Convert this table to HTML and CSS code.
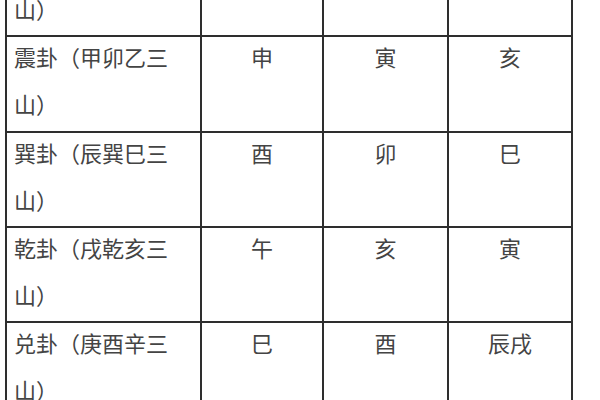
FILE: index.html
```html
<!DOCTYPE html>
<html lang="zh">
<head>
<meta charset="utf-8">
<link rel="stylesheet" href="styles.css">
</head>
<body>
<table class="gua">
  <colgroup>
    <col class="c1"><col class="c2"><col class="c3"><col class="c4">
  </colgroup>
  <tbody>
    <tr><td class="name"><div class="txt">坎卦（壬子癸三山）</div></td><td><div class="txt">辰</div></td><td><div class="txt">子</div></td><td><div class="txt">申</div></td></tr>
    <tr><td class="name"><div class="txt">震卦（甲卯乙三山）</div></td><td><div class="txt">申</div></td><td><div class="txt">寅</div></td><td><div class="txt">亥</div></td></tr>
    <tr><td class="name"><div class="txt">巽卦（辰巽巳三山）</div></td><td><div class="txt">酉</div></td><td><div class="txt">卯</div></td><td><div class="txt">巳</div></td></tr>
    <tr><td class="name"><div class="txt">乾卦（戌乾亥三山）</div></td><td><div class="txt">午</div></td><td><div class="txt">亥</div></td><td><div class="txt">寅</div></td></tr>
    <tr><td class="name"><div class="txt">兑卦（庚酉辛三山）</div></td><td><div class="txt">巳</div></td><td><div class="txt">酉</div></td><td><div class="txt">辰戌</div></td></tr>
  </tbody>
</table>
</body>
</html>
```

FILE: styles.css
```css
html, body {
  margin: 0;
  padding: 0;
  background: #ffffff;
  overflow: hidden;
}
.gua {
  border-collapse: collapse;
  margin: -60px 0 0 5px;
  width: 566px;
  table-layout: fixed;
  font-family: "Noto Sans CJK SC", "Noto Sans CJK JP", sans-serif;
  font-size: 22px;
  font-weight: 400;
  color: #444444;
}
.c1 { width: 195px; }
.c2 { width: 122px; }
.c3 { width: 125px; }
.c4 { width: 124px; }
.gua td {
  border: 2px solid #2e2e2e;
  vertical-align: top;
  text-align: center;
  line-height: 47px;
  height: 95.3px;
  padding: 0 10px;
  box-sizing: border-box;
}
.gua td.name {
  text-align: left;
  padding-left: 7px;
}
.txt {
  margin-top: -4px;
}
```
